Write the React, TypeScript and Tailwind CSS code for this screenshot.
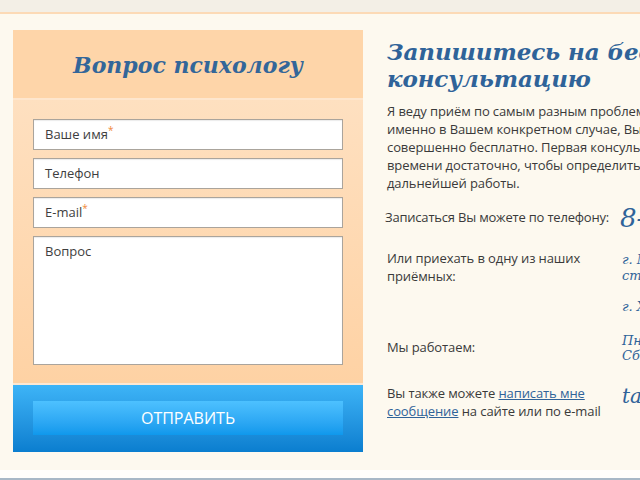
import React from "react"

const sans = { fontFamily: "'Open Sans', 'Noto Sans', sans-serif" }
const serif = { fontFamily: "'DejaVu Serif', 'Liberation Serif', serif" }

function Field({ label, required }: { label: string; required?: boolean }) {
  return (
    <div className="h-[31px] w-full border border-[#aaa49c] bg-white px-[11px] flex items-center text-[13px] text-[#3e3e3e] shadow-[inset_0_1px_1px_rgba(0,0,0,0.08)]">
      {label}
      {required && <span className="text-[#f0883a] text-[10px] -mt-2">*</span>}
    </div>
  )
}

export default function App() {
  return (
    <div className="w-[640px] h-[480px] overflow-hidden bg-[#fdf9ef] relative" style={sans}>
      <div className="h-[12px] bg-[#f3efe6]" />
      <div className="h-[2px] bg-[#fcdab6]" />

      <div className="flex w-[1000px] pt-[16px] pl-[13px]">
        {/* form panel */}
        <div className="w-[350px] shrink-0 flex flex-col">
          <div className="h-[68px] bg-[#fed5a9] flex items-center justify-center">
            <h2 className="text-[22px] font-bold italic text-[#336699] mt-[2px]" style={serif}>
              Вопрос психологу
            </h2>
          </div>
          <div className="h-[2px] bg-[#fee6cd]" />
          <div className="flex flex-col gap-[8px] px-[20px] pt-[19px] pb-[18px] bg-gradient-to-b from-[#fee0c0] to-[#fed2a4]">
            <Field label="Ваше имя" required />
            <Field label="Телефон" />
            <Field label="E-mail" required />
            <div className="h-[129px] w-full border border-[#aaa49c] bg-white px-[11px] pt-[5px] text-[13px] text-[#3e3e3e] shadow-[inset_0_1px_1px_rgba(0,0,0,0.08)]">
              Вопрос
            </div>
          </div>
          <div className="h-[2px] bg-[#fde8d3]" />
          <div className="h-[67px] bg-gradient-to-b from-[#3db4f7] to-[#0a7ecf] px-[20px] pt-[16px]">
            <div className="h-[34px] bg-gradient-to-b from-[#4dc1ff] to-[#0e98ec] flex items-center justify-center text-white text-[16px]">
              ОТПРАВИТЬ
            </div>
          </div>
        </div>

        {/* right column */}
        <div className="pl-[24px] pt-[8px] text-[#3a3a3a] text-[13px] tracking-[-0.1px]">
          <h1 className="text-[23px] leading-[27px] font-bold italic text-[#2f6399] whitespace-nowrap" style={serif}>
            Запишитесь на бесплатную
            <br />
            консультацию
          </h1>
          <p className="mt-[10px] leading-[18px] whitespace-nowrap">
            Я веду приём по самым разным проблемам. Чтобы понять, чем я могу помочь
            <br />
            именно в Вашем конкретном случае, Вы можете записаться на консультацию
            <br />
            совершенно бесплатно. Первая консультация длится около часа — этого
            <br />
            времени достаточно, чтобы определить актуальную проблему и план
            <br />
            дальнейшей работы.
          </p>

          <div className="mt-[8px] flex flex-col">
            <div className="flex items-center h-[36px]">
              <div className="w-[235px] shrink-0 -ml-[2px] tracking-[-0.2px]">Записаться Вы можете по телефону:</div>
              <div className="text-[26px] italic text-[#2f6399] whitespace-nowrap" style={serif}>
                8-800-000-00-00
              </div>
            </div>

            <div className="flex mt-[15px]">
              <div className="w-[235px] shrink-0 leading-[18px] -mt-[2px]">
                Или приехать в одну из наших
                <br />
                приёмных:
              </div>
              <div className="text-[13px] leading-[16px] italic text-[#2f6399] whitespace-nowrap pt-[1px] tracking-normal" style={serif}>
                <div>г. Москва, ул. Примерная, д. 1,</div>
                <div>ст. м. Центральная</div>
                <div className="mt-[15px]">г. Химки, ул. Лесная, д. 5</div>
              </div>
            </div>

            <div className="flex mt-[18px] items-center">
              <div className="w-[235px] shrink-0">Мы работаем:</div>
              <div className="text-[13px] leading-[15px] italic text-[#2f6399] whitespace-nowrap tracking-normal" style={serif}>
                <div>Пн-Пт: с 10:00 до 21:00</div>
                <div>Сб-Вс: с 11:00 до 18:00</div>
              </div>
            </div>

            <div className="flex mt-[21px]">
              <div className="w-[235px] shrink-0 leading-[18px]">
                Вы также можете{" "}
                <a className="underline text-[#2f6399]">написать мне</a>
                <br />
                <a className="underline text-[#2f6399]">сообщение</a> на сайте или по e-mail
              </div>
              <div className="text-[20px] italic text-[#2f6399] whitespace-nowrap -mt-[3px] tracking-normal" style={serif}>
                tatiana@example.ru
              </div>
            </div>
          </div>
        </div>
      </div>

      <div className="absolute left-0 right-0 bottom-0 h-[10px] bg-[#fffefb]">
        <div className="absolute left-0 right-0 bottom-0 h-[2px] bg-[#a8b8c6]" />
      </div>
    </div>
  )
}
